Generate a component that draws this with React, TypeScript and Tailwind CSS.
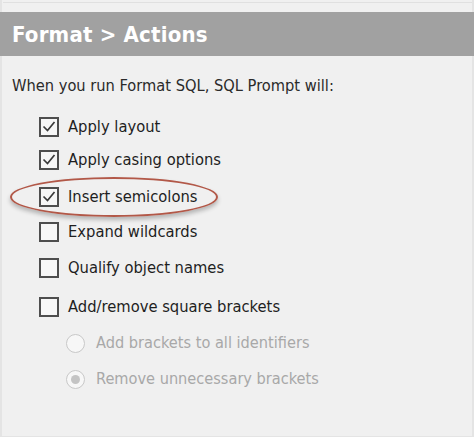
import React from "react";

const font = { fontFamily: '"DejaVu Sans Condensed", "DejaVu Sans", Verdana, sans-serif' };

function Check({ checked }: { checked: boolean }) {
  return (
    <div className="w-[20px] h-[20px] border-2 border-[#4e4e4e] bg-[#f7f7f7] flex items-center justify-center shrink-0">
      {checked && (
        <svg width="16" height="16" viewBox="0 0 16 16">
          <path d="M2.5 7.5 L6.5 11.5 L13.5 3" fill="none" stroke="#3a3a3a" strokeWidth="1.7" />
        </svg>
      )}
    </div>
  );
}

function Radio({ checked }: { checked: boolean }) {
  return (
    <div className="w-[19px] h-[19px] rounded-full border-[1.5px] border-[#c8c8c8] bg-[#f7f7f7] flex items-center justify-center shrink-0">
      {checked && <div className="w-[9px] h-[9px] rounded-full bg-[#c4c4c4]" />}
    </div>
  );
}

export default function App() {
  const items: [string, boolean, string][] = [
    ["Apply layout", true, "mt-[21px]"],
    ["Apply casing options", true, "mt-[13px]"],
    ["Insert semicolons", true, "mt-[17px]"],
    ["Expand wildcards", false, "mt-[15px]"],
    ["Qualify object names", false, "mt-[16px]"],
    ["Add/remove square brackets", false, "mt-[19px]"],
  ];
  return (
    <div className="w-[474px] h-[437px] bg-[#f0f0f0] overflow-hidden" style={font}>
      <div className="w-[474px] h-[437px] border-l-2 border-r-2 border-b border-[#e4e4e4] pl-[1px]">
        <div className="h-[12px] pt-[2px]">
          <div className="border-t border-[#e0e0e0]" />
        </div>
        <div className="h-[44px] bg-[#a1a1a1] flex items-center pl-[12px] -ml-[3px] -mr-[2px]">
          <span className="text-white font-bold text-[22px] tracking-[0.2px]">Format &gt; Actions</span>
        </div>
        <div className="pl-[9px] pt-[20px]">
          <div className="text-[16.3px] text-[#2a2a2a] leading-[20px] h-[20px] flex items-center">When you run Format SQL, SQL Prompt will:</div>
          <div className="pl-[27px]">
            {items.map(([label, checked, mt]) => (
              <div key={label} className={`relative flex items-center gap-[9px] h-[20px] ${mt}`}>
                <Check checked={checked} />
                <span className="text-[16.4px] text-[#1e1e1e]">{label}</span>
                {label === "Insert semicolons" && (
                  <div className="absolute left-[-29px] top-[-10px] w-[208px] h-[40px] rounded-[50%] border-2 border-[#b25848] shadow-[0_3px_4px_rgba(0,0,0,0.25)]" />
                )}
              </div>
            ))}
            <div className="pl-[27px]">
              <div className="flex items-center gap-[11px] h-[20px] mt-[16px]">
                <Radio checked={false} />
                <span className="text-[16.2px] text-[#a8a8a8]">Add brackets to all identifiers</span>
              </div>
              <div className="flex items-center gap-[11px] h-[20px] mt-[16px]">
                <Radio checked={true} />
                <span className="text-[16.2px] text-[#a8a8a8]">Remove unnecessary brackets</span>
              </div>
            </div>
          </div>
        </div>
      </div>
    </div>
  );
}
